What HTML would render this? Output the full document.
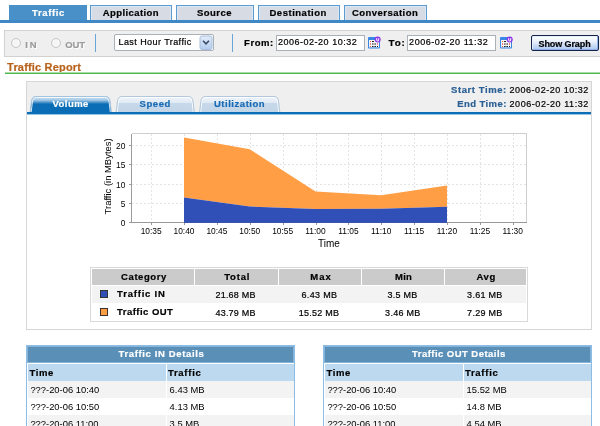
<!DOCTYPE html>
<html><head><meta charset="utf-8">
<style>
*{box-sizing:border-box;margin:0;padding:0}
html,body{width:600px;height:426px;overflow:hidden;background:#fff;font-family:"Liberation Sans",sans-serif;font-size:10px;color:#000}
.abs{position:absolute}
.tx{position:absolute;white-space:nowrap;line-height:12px}
.b{font-weight:bold;-webkit-text-stroke:0.2px}
.v,#sel,#fv,#tv,#stv,#etv{-webkit-text-stroke:0.2px}
#toptabs .t{position:absolute;top:5px;height:16px;border:1px solid #5b9bd0;border-bottom:none;background:#d7dbe4}
#toptabs .t i{position:absolute;left:0;right:0;top:0;bottom:0;border:1px solid #dde8f5;border-bottom:none}
#toptabs .t.sel{background:#4a90c8;border-color:#4a90c8}
#bl{left:0;top:20px;width:600px;height:3px;background:#3f88c5}
#toolbar{left:4px;top:30px;width:597px;height:27px;background:#efefef;border:1px solid #d2d2d2}
.vs{position:absolute;top:34px;width:1px;height:18px;background:#68a4d8}
.inp{position:absolute;background:#fff;border:1px solid #a9b0b8;height:17px;top:34px}
#gl{left:5px;top:72px;width:595px;height:2px;background:linear-gradient(#a9dca9 50%,#4db84d 50%)}
#panel{left:26px;top:81px;width:566px;height:249px;border:1px solid #d6d6d6;background:#fff}
#phead{left:27px;top:82px;width:564px;height:30px;background:#efefef}
#pline{left:27px;top:112px;width:564px;height:3px;background:linear-gradient(#0b6db5 0,#0b6db5 66%,#9cc5e3 67%)}
.it{position:absolute;top:96px;height:16px;border-radius:7px 7px 0 0}
.it.u{background:linear-gradient(#f1f5f9,#c6d9ea);border:1px solid #a9c2da;border-bottom:none;box-shadow:inset 1px 1px 0 #fff,inset -1px 0 0 #fff}
.it.s{background:linear-gradient(#4b9ad6 0,#0f6fb7 35%,#0e6db4);border:1px solid #b8d4ea;border-bottom:none}
#sum{left:90px;top:267px;width:438px;height:55px;border:1px solid #d9d9d9;background:#fff}
#sum .hd{position:absolute;top:1px;height:16px;background:#cbcbcb}
#sum .r1{position:absolute;left:1px;top:18px;width:434px;height:17px;background:#f3f3f3}
.sw{position:absolute;width:8px;height:8px;border:1px solid #333}
.det{position:absolute;top:345px;width:269px;height:90px;border:1px solid #8dbde4;background:#fff}
.det .h{position:absolute;left:0;right:0;top:0;height:17px;background:#5a8fb8;box-shadow:inset 0 0 0 1px #85b4da}
.det .sh{position:absolute;left:1px;right:0;top:18px;height:17px;background:#bdd9ef}
.det .ra{position:absolute;left:1px;right:0;height:17px;background:#f3f3f3}
.det .cs{position:absolute;left:139px;top:18px;width:1px;height:80px;background:#fff}
.a{font-size:9.4px}
.cal{position:absolute;top:37px;overflow:visible}
</style></head><body><div id="wrap" style="position:absolute;left:0;top:0;width:600px;height:426px;will-change:transform">
<div id="toptabs">
<div class="t sel" style="left:9px;width:78px"></div>
<div class="t" style="left:90px;width:82px"><i></i></div>
<div class="t" style="left:176px;width:78px"><i></i></div>
<div class="t" style="left:258px;width:82px"><i></i></div>
<div class="t" style="left:344px;width:83px"><i></i></div>
</div>
<div class="tx b" id="tt1" style="left:32.0px;top:7.0px;font-size:9.5px;letter-spacing:0.63px;color:#fff">Traffic</div>
<div class="tx b" id="tt2" style="left:102.8px;top:7.0px;font-size:9.5px;letter-spacing:0.41px;">Application</div>
<div class="tx b" id="tt3" style="left:197.0px;top:7.0px;font-size:9.5px;letter-spacing:0.46px;">Source</div>
<div class="tx b" id="tt4" style="left:269.5px;top:7.0px;font-size:9.5px;letter-spacing:0.51px;">Destination</div>
<div class="tx b" id="tt5" style="left:352.0px;top:7.0px;font-size:9.5px;letter-spacing:0.46px;">Conversation</div>
<div id="bl" class="abs"></div>
<div id="toolbar" class="abs"></div>
<div class="abs" style="left:11px;top:38px;width:10px;height:10px;border:1px solid #c6c6c6;border-radius:50%;background:#f6f6f6"></div>
<div class="tx b" id="rin" style="left:25.3px;top:39.0px;font-size:9.5px;letter-spacing:1.80px;color:#9c9c9c;text-shadow:1px 1px 0 #fff;">IN</div>
<div class="abs" style="left:51px;top:38px;width:10px;height:10px;border:1px solid #c6c6c6;border-radius:50%;background:#f6f6f6"></div>
<div class="tx b" id="rout" style="left:65.3px;top:39.0px;font-size:9.5px;letter-spacing:-0.18px;color:#9c9c9c;text-shadow:1px 1px 0 #fff;">OUT</div>
<div class="vs" style="left:95px"></div>
<div class="inp" style="left:114px;width:100px;border-radius:2px"></div>
<div class="tx" id="sel" style="left:118.5px;top:36.0px;font-size:9px;letter-spacing:0.43px;">Last Hour Traffic</div>
<svg class="abs" style="left:199px;top:35px" width="14" height="15"><defs><linearGradient id="dd" x1="0" y1="0" x2="0" y2="1"><stop offset="0" stop-color="#e3edfa"/><stop offset="1" stop-color="#b3cdee"/></linearGradient></defs><rect x="1" y="1" width="12" height="13.5" rx="2" fill="url(#dd)" stroke="#a8bedc"/><path d="M4,5.8 L7,8.8 L10,5.8" fill="none" stroke="#3b4a66" stroke-width="1.6"/></svg>
<div class="vs" style="left:232px"></div>
<div class="tx b" id="from" style="left:244.0px;top:37.0px;font-size:9.5px;letter-spacing:0.59px;">From:</div>
<div class="inp" style="left:276px;width:89px;top:35px;height:16px"></div>
<div class="tx" id="fv" style="left:277.9px;top:36.0px;font-size:9px;letter-spacing:0.52px;">2006-02-20 10:32</div>
<div class="tx b" id="to" style="left:388.5px;top:37.0px;font-size:9.8px;letter-spacing:0.89px;">To:</div>
<div class="inp" style="left:407px;width:89px;top:35px;height:16px"></div>
<div class="tx" id="tv" style="left:409.1px;top:36.0px;font-size:9px;letter-spacing:0.55px;">2006-02-20 11:32</div>
<div class="abs" style="left:531px;top:35px;width:68px;height:16px;border:1px solid #15244a;border-radius:2px;background:linear-gradient(#fff 0,#e9f0fc 40%,#a9c4f0 100%);box-shadow:inset -1px -1px 0 #8fb0e8,inset 1px 1px 0 #e8effc"></div>
<div class="tx b" id="sg" style="left:538.5px;top:38.0px;font-size:9px;letter-spacing:-0.09px;">Show Graph</div>
<svg class="cal" style="left:368px" width="13" height="12" viewBox="0 0 13 12"><rect x="0" y="0" width="12" height="11.4" rx="1" fill="#3a86e4"/><rect x="1" y="3" width="10" height="7.4" fill="#f3f5fa"/><g fill="#e0652a"><rect x="2" y="4" width="1" height="1"/><rect x="2" y="9" width="1" height="1"/></g><g fill="#ee7a7a"><rect x="2" y="6" width="1" height="2"/><rect x="9" y="6" width="1" height="2"/></g><g fill="#222"><rect x="4" y="4" width="2" height="1"/><rect x="4" y="9" width="1.6" height="1"/><rect x="6.4" y="9" width="1.6" height="1"/><rect x="9" y="9" width="1" height="1"/></g><g fill="#888"><rect x="4" y="6" width="1.6" height="2"/><rect x="6.4" y="6" width="1.6" height="2"/></g><circle cx="9.7" cy="2.6" r="3" fill="#8d34e6"/><path d="M8.7,1.2 V3 Q8.7,4.1 9.7,4.1 Q10.7,4.1 10.7,3 V1.2" fill="none" stroke="#fff" stroke-width="1"/></svg>
<svg class="cal" style="left:499.5px" width="13" height="12" viewBox="0 0 13 12"><rect x="0" y="0" width="12" height="11.4" rx="1" fill="#3a86e4"/><rect x="1" y="3" width="10" height="7.4" fill="#f3f5fa"/><g fill="#e0652a"><rect x="2" y="4" width="1" height="1"/><rect x="2" y="9" width="1" height="1"/></g><g fill="#ee7a7a"><rect x="2" y="6" width="1" height="2"/><rect x="9" y="6" width="1" height="2"/></g><g fill="#222"><rect x="4" y="4" width="2" height="1"/><rect x="4" y="9" width="1.6" height="1"/><rect x="6.4" y="9" width="1.6" height="1"/><rect x="9" y="9" width="1" height="1"/></g><g fill="#888"><rect x="4" y="6" width="1.6" height="2"/><rect x="6.4" y="6" width="1.6" height="2"/></g><circle cx="9.7" cy="2.6" r="3" fill="#8d34e6"/><path d="M8.7,1.2 V3 Q8.7,4.1 9.7,4.1 Q10.7,4.1 10.7,3 V1.2" fill="none" stroke="#fff" stroke-width="1"/></svg>
<div class="tx b" id="title" style="left:7.1px;top:61.0px;font-size:11px;letter-spacing:0.18px;color:#b8621b">Traffic Report</div>
<div id="gl" class="abs"></div>
<div id="panel" class="abs"></div>
<div id="phead" class="abs"></div>
<svg class="abs" style="left:0;top:0" width="600" height="120"><defs><linearGradient id="gs" gradientUnits="userSpaceOnUse" x1="0" y1="97" x2="0" y2="112"><stop offset="0" stop-color="#c4dcf0"/><stop offset="0.2" stop-color="#a8cbe8"/><stop offset="0.47" stop-color="#0b6db5"/><stop offset="1" stop-color="#0b6db5"/></linearGradient><linearGradient id="gu" gradientUnits="userSpaceOnUse" x1="0" y1="97" x2="0" y2="112"><stop offset="0" stop-color="#eef3f9"/><stop offset="0.36" stop-color="#e2ebf5"/><stop offset="0.44" stop-color="#c6d8e9"/><stop offset="1" stop-color="#c3d6e8"/></linearGradient></defs><path d="M30.2,112 L31.4,102 Q31.7,96.5 36.0,96.5 L105.5,96.5 Q109.8,96.5 110.1,102 L111.3,112Z" fill="url(#gs)" stroke="none"/><path d="M31.2,112 L32.4,102 Q32.7,97.5 37.0,97.5 L104.5,97.5 Q108.8,97.5 109.1,102 L110.3,112" fill="none" stroke="#fff" stroke-opacity="0.85"/><path d="M30.2,112 L31.4,102 Q31.7,96.5 36.0,96.5 L105.5,96.5 Q109.8,96.5 110.1,102 L111.3,112" fill="none" stroke="#a3c3de"/><path d="M116.2,112 L117.4,102 Q117.7,96.5 122.0,96.5 L188.5,96.5 Q192.8,96.5 193.1,102 L194.3,112Z" fill="url(#gu)" stroke="none"/><path d="M117.2,112 L118.4,102 Q118.7,97.5 123.0,97.5 L187.5,97.5 Q191.8,97.5 192.1,102 L193.3,112" fill="none" stroke="#fff" stroke-opacity="0.9"/><path d="M116.2,112 L117.4,102 Q117.7,96.5 122.0,96.5 L188.5,96.5 Q192.8,96.5 193.1,102 L194.3,112" fill="none" stroke="#b3c8dc"/><path d="M199.6,112 L200.8,102 Q201.1,96.5 205.4,96.5 L274.0,96.5 Q278.3,96.5 278.6,102 L279.8,112Z" fill="url(#gu)" stroke="none"/><path d="M200.6,112 L201.8,102 Q202.1,97.5 206.4,97.5 L273.0,97.5 Q277.3,97.5 277.6,102 L278.8,112" fill="none" stroke="#fff" stroke-opacity="0.9"/><path d="M199.6,112 L200.8,102 Q201.1,96.5 205.4,96.5 L274.0,96.5 Q278.3,96.5 278.6,102 L279.8,112" fill="none" stroke="#b3c8dc"/></svg>
<div id="pline" class="abs"></div>
<div class="tx b" id="it1" style="left:52.5px;top:98.0px;font-size:9.5px;letter-spacing:0.44px;color:#fff">Volume</div>
<div class="tx b" id="it2" style="left:139.5px;top:98.0px;font-size:9.5px;letter-spacing:0.57px;color:#1a6bb5">Speed</div>
<div class="tx b" id="it3" style="left:213.9px;top:98.0px;font-size:9.5px;letter-spacing:0.54px;color:#1a6bb5">Utilization</div>
<div class="tx b" id="st" style="left:451.0px;top:84.0px;font-size:9.5px;letter-spacing:0.58px;color:#2a5f95">Start Time:</div>
<div class="tx" id="stv" style="left:509.5px;top:84.0px;font-size:9px;letter-spacing:0.52px;">2006-02-20 10:32</div>
<div class="tx b" id="et" style="left:457.2px;top:98.0px;font-size:9.5px;letter-spacing:0.42px;color:#2a5f95">End Time:</div>
<div class="tx" id="etv" style="left:509.5px;top:98.0px;font-size:9px;letter-spacing:0.56px;">2006-02-20 11:32</div>
<svg class="abs" style="left:0;top:0" width="600" height="426" font-family="Liberation Sans, sans-serif" font-size="8.4" fill="#000">
<g stroke="#e4e4e4" stroke-width="1" stroke-dasharray="2,2" shape-rendering="crispEdges">
<line x1="151.5" y1="134" x2="151.5" y2="222"/><line x1="184.5" y1="134" x2="184.5" y2="222"/><line x1="217.5" y1="134" x2="217.5" y2="222"/><line x1="250.5" y1="134" x2="250.5" y2="222"/><line x1="283.5" y1="134" x2="283.5" y2="222"/><line x1="316.5" y1="134" x2="316.5" y2="222"/><line x1="348.5" y1="134" x2="348.5" y2="222"/><line x1="381.5" y1="134" x2="381.5" y2="222"/><line x1="414.5" y1="134" x2="414.5" y2="222"/><line x1="447.5" y1="134" x2="447.5" y2="222"/><line x1="480.5" y1="134" x2="480.5" y2="222"/><line x1="513.5" y1="134" x2="513.5" y2="222"/><line x1="132" y1="203.5" x2="527" y2="203.5"/><line x1="132" y1="184.5" x2="527" y2="184.5"/><line x1="132" y1="164.5" x2="527" y2="164.5"/><line x1="132" y1="145.5" x2="527" y2="145.5"/></g>
<path d="M184.0,137.55 L249.75,149.24 L315.5,191.39 L381.25,195.37 L447.0,185.58 L447.0,206.75 L381.25,208.76 L315.5,208.96 L249.75,206.52 L184.0,197.62Z" fill="#ff9e45"/>
<path d="M184.0,197.62 L249.75,206.52 L315.5,208.96 L381.25,208.76 L447.0,206.75 L447.0,223 L184.0,223Z" fill="#3050b8"/>
<g shape-rendering="crispEdges" fill="none"><path d="M131.5,133.5 H526.5 V222.5" stroke="#cfcfcf"/><path d="M131.5,133.5 V222.5 H526.5" stroke="#9a9a9a"/></g>
<g stroke="#9a9a9a" shape-rendering="crispEdges"><line x1="151.5" y1="223" x2="151.5" y2="225"/><line x1="184.5" y1="223" x2="184.5" y2="225"/><line x1="217.5" y1="223" x2="217.5" y2="225"/><line x1="250.5" y1="223" x2="250.5" y2="225"/><line x1="283.5" y1="223" x2="283.5" y2="225"/><line x1="316.5" y1="223" x2="316.5" y2="225"/><line x1="348.5" y1="223" x2="348.5" y2="225"/><line x1="381.5" y1="223" x2="381.5" y2="225"/><line x1="414.5" y1="223" x2="414.5" y2="225"/><line x1="447.5" y1="223" x2="447.5" y2="225"/><line x1="480.5" y1="223" x2="480.5" y2="225"/><line x1="513.5" y1="223" x2="513.5" y2="225"/><line x1="129" y1="222.5" x2="131" y2="222.5"/><line x1="129" y1="203.5" x2="131" y2="203.5"/><line x1="129" y1="184.5" x2="131" y2="184.5"/><line x1="129" y1="164.5" x2="131" y2="164.5"/><line x1="129" y1="145.5" x2="131" y2="145.5"/></g><rect x="184" y="222" width="263" height="1" fill="#3a54b0"/>
<g text-anchor="middle"><text x="151.12" y="234">10:35</text><text x="184.0" y="234">10:40</text><text x="216.88" y="234">10:45</text><text x="249.75" y="234">10:50</text><text x="282.62" y="234">10:55</text><text x="315.5" y="234">11:00</text><text x="348.38" y="234">11:05</text><text x="381.25" y="234">11:10</text><text x="414.12" y="234">11:15</text><text x="447.0" y="234">11:20</text><text x="479.88" y="234">11:25</text><text x="512.75" y="234">11:30</text></g>
<g text-anchor="end"><text x="125.4" y="226.2">0</text><text x="125.4" y="206.8">5</text><text x="125.4" y="187.5">10</text><text x="125.4" y="168.1">15</text><text x="125.4" y="148.8">20</text></g>
<text x="329" y="247" text-anchor="middle" font-size="10">Time</text>
<text transform="translate(111,176.4) rotate(-90)" text-anchor="middle" font-size="9.45">Traffic (in MBytes)</text>
</svg>
<div id="sum" class="abs">
 <div class="hd" style="left:1px;width:102px"></div><div class="hd" style="left:104px;width:83px"></div><div class="hd" style="left:188px;width:82px"></div><div class="hd" style="left:271px;width:82px"></div><div class="hd" style="left:354px;width:81px"></div>
 <div class="r1"></div>
 <div class="sw" style="left:9px;top:22px;background:#3050b8"></div>
 <div class="sw" style="left:9px;top:40px;background:#ff9e45"></div>
</div>
<div class="tx b" id="h1" style="left:121.1px;top:271.0px;font-size:9.5px;letter-spacing:0.57px;">Category</div>
<div class="tx b" id="h2" style="left:224.2px;top:271.0px;font-size:9.5px;letter-spacing:0.83px;">Total</div>
<div class="tx b" id="h3" style="left:310.3px;top:271.0px;font-size:9.5px;letter-spacing:1.01px;">Max</div>
<div class="tx b" id="h4" style="left:395.0px;top:271.0px;font-size:9.5px;letter-spacing:0.22px;">Min</div>
<div class="tx b" id="h5" style="left:476.5px;top:271.0px;font-size:9.5px;letter-spacing:0.60px;">Avg</div>
<div class="tx b" id="c1" style="left:117.1px;top:288.0px;font-size:9.5px;letter-spacing:0.79px;">Traffic IN</div>
<div class="tx b" id="c2" style="left:117.1px;top:306.0px;font-size:9.5px;letter-spacing:0.46px;">Traffic OUT</div>
<div class="tx v" id="v11" style="left:215.4px;top:289.0px;font-size:9px;letter-spacing:0.24px;">21.68 MB</div>
<div class="tx v" id="v12" style="left:301.5px;top:289.0px;font-size:9px;letter-spacing:0.33px;">6.43 MB</div>
<div class="tx v" id="v13" style="left:387.5px;top:289.0px;font-size:9px;letter-spacing:0.26px;">3.5 MB</div>
<div class="tx v" id="v14" style="left:467.1px;top:289.0px;font-size:9px;letter-spacing:0.28px;">3.61 MB</div>
<div class="tx v" id="v21" style="left:215.4px;top:307.0px;font-size:9px;letter-spacing:0.24px;">43.79 MB</div>
<div class="tx v" id="v22" style="left:298.8px;top:307.0px;font-size:9px;letter-spacing:0.25px;">15.52 MB</div>
<div class="tx v" id="v23" style="left:385.1px;top:307.0px;font-size:9px;letter-spacing:0.28px;">3.46 MB</div>
<div class="tx v" id="v24" style="left:467.1px;top:307.0px;font-size:9px;letter-spacing:0.28px;">7.29 MB</div>
<div class="det" style="left:26px"><div class="h"></div><div class="sh"></div><div class="ra" style="top:35px"></div><div class="ra" style="top:69px"></div><div class="cs"></div></div>
<div class="det" style="left:323px"><div class="h"></div><div class="sh"></div><div class="ra" style="top:35px"></div><div class="ra" style="top:69px"></div><div class="cs"></div></div>
<div class="tx b" id="d1h" style="left:118.5px;top:348.0px;font-size:9.5px;letter-spacing:0.64px;color:#fff">Traffic IN Details</div>
<div class="tx b" id="d2h" style="left:412.0px;top:348.0px;font-size:9.5px;letter-spacing:0.46px;color:#fff">Traffic OUT Details</div>
<div class="tx b" id="d1a" style="left:29.5px;top:367.0px;font-size:9.5px;letter-spacing:0.59px;">Time</div>
<div class="tx b" id="d1b" style="left:167.9px;top:367.0px;font-size:9.5px;letter-spacing:0.73px;">Traffic</div>
<div class="tx b" id="d2a" style="left:326.5px;top:367.0px;font-size:9.5px;letter-spacing:0.59px;">Time</div>
<div class="tx b" id="d2b" style="left:464.9px;top:367.0px;font-size:9.5px;letter-spacing:0.73px;">Traffic</div>
<div class="tx a" style="left:30.4px;top:384.4px">???-20-06 10:40</div><div class="tx a" style="left:169.6px;top:384.4px">6.43 MB</div>
<div class="tx a" style="left:30.4px;top:401.4px">???-20-06 10:50</div><div class="tx a" style="left:169.6px;top:401.4px">4.13 MB</div>
<div class="tx a" style="left:30.4px;top:418.4px">???-20-06 11:00</div><div class="tx a" style="left:169.6px;top:418.4px">3.5 MB</div>
<div class="tx a" style="left:327.4px;top:384.4px">???-20-06 10:40</div><div class="tx a" style="left:466.6px;top:384.4px">15.52 MB</div>
<div class="tx a" style="left:327.4px;top:401.4px">???-20-06 10:50</div><div class="tx a" style="left:466.6px;top:401.4px">14.8 MB</div>
<div class="tx a" style="left:327.4px;top:418.4px">???-20-06 11:00</div><div class="tx a" style="left:466.6px;top:418.4px">4.54 MB</div>
</div></body></html>
